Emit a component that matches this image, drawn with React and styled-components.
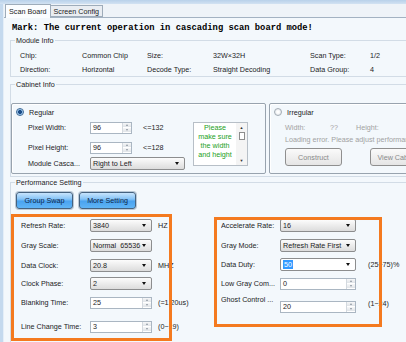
import React from 'react'
import styled, { createGlobalStyle } from 'styled-components'

const GlobalStyle = createGlobalStyle`
  body {
    margin: 0;
    background: #ffffff;
  }

  * {
    box-sizing: border-box;
  }
`

const leftRows = [
  { label: 'Refresh Rate:', kind: 'select', value: '3840', unit: 'HZ', mt: 5 },
  { label: 'Gray Scale:', kind: 'select', value: 'Normal  65536', mt: 7 },
  { label: 'Data Clock:', kind: 'select', value: '20.8', unit: 'MHZ', mt: 7 },
  { label: 'Clock Phase:', kind: 'select', value: '2', mt: 5 },
  { label: 'Blanking Time:', kind: 'spin', value: '25', unit: '(=1.20us)', mt: 6 },
  { label: 'Line Change Time:', kind: 'spin', value: '3', unit: '(0~19)', mt: 11 },
]

const rightRows = [
  { label: 'Accelerate Rate:', kind: 'select', value: '16', mt: 5 },
  { label: 'Gray Mode:', kind: 'select', value: 'Refresh Rate First', mt: 7 },
  { label: 'Data Duty:', kind: 'edit', value: '50', unit: '(25~75)%', mt: 6 },
  { label: 'Low Gray Com...', kind: 'spin', value: '0', mt: 6 },
  { label: 'Ghost Control ...', kind: 'spin', value: '20', unit: '(1~24)', mt: 3, tall: true },
]

function Dropdown({ width, value, editable }) {
  return (
    <Select $w={width} $editable={editable}>
      {editable ? <Highlight>{value}</Highlight> : <span>{value}</span>}
      <Arrow />
    </Select>
  )
}

function SpinBox({ width, value }) {
  return (
    <Spin $w={width}>
      <SpinText>{value}</SpinText>
      <SpinButtons>
        <SpinBtn>
          <SpinTri $up />
        </SpinBtn>
        <SpinBtn>
          <SpinTri />
        </SpinBtn>
      </SpinButtons>
    </Spin>
  )
}

function SettingRow({ row, labelWidth, controlWidth, unitGap }) {
  return (
    <Row $mt={row.mt} $tall={row.tall}>
      <RowLabel $w={labelWidth}>{row.label}</RowLabel>
      <RowControl>
        {row.kind === 'spin' ? (
          <SpinBox width={controlWidth} value={row.value} />
        ) : (
          <Dropdown width={controlWidth} value={row.value} editable={row.kind === 'edit'} />
        )}
      </RowControl>
      {row.unit && <Unit $gap={unitGap}>{row.unit}</Unit>}
    </Row>
  )
}

export default function App() {
  return (
    <>
      <GlobalStyle />
      <Window>
        <TopStrip />
        <Body>
          <SideStrip />
          <Content>
            <TabBar>
              <Tab $active>Scan Board</Tab>
              <Tab>Screen Config</Tab>
            </TabBar>
            <Page>
              <Mark>Mark: The current operation in cascading scan board mode!</Mark>

              <Group $mt={1}>
                <Legend>Module Info</Legend>
                <InfoGrid>
                  <span>Chip:</span>
                  <span>Common Chip</span>
                  <span>Size:</span>
                  <span>32W×32H</span>
                  <span>Scan Type:</span>
                  <span>1/2</span>
                  <span>Direction:</span>
                  <span>Horizontal</span>
                  <span>Decode Type:</span>
                  <span>Straight Decoding</span>
                  <span>Data Group:</span>
                  <span>4</span>
                </InfoGrid>
              </Group>

              <Group $mt={3}>
                <Legend>Cabinet Info</Legend>
                <CabinetRow>
                  <ModeBox $w={255}>
                    <RadioLine>
                      <Radio $checked />
                      <span>Regular</span>
                    </RadioLine>
                    <RegularBody>
                      <Fields>
                        <FieldRow $mt={1}>
                          <FieldLabel>Pixel Width:</FieldLabel>
                          <SpinBox width={42} value="96" />
                          <Limit>&lt;=132</Limit>
                        </FieldRow>
                        <FieldRow $mt={7}>
                          <FieldLabel>Pixel Height:</FieldLabel>
                          <SpinBox width={42} value="96" />
                          <Limit>&lt;=128</Limit>
                        </FieldRow>
                        <FieldRow $mt={3}>
                          <FieldLabel>Module Casca...</FieldLabel>
                          <Dropdown width={95} value="Right to Left" />
                        </FieldRow>
                      </Fields>
                      <HintBox>
                        <HintText>
                          Please
                          <br />
                          make sure
                          <br />
                          the width
                          <br />
                          and height
                        </HintText>
                        <ScrollBar>
                          <ScrollArrow>▲</ScrollArrow>
                          <ScrollThumb />
                          <ScrollArrow>▼</ScrollArrow>
                        </ScrollBar>
                      </HintBox>
                    </RegularBody>
                  </ModeBox>

                  <ModeBox $w={190}>
                    <RadioLine>
                      <Radio />
                      <span>Irregular</span>
                    </RadioLine>
                    <GrayLine $mt={4}>
                      <GrayCell $w={45}>Width:</GrayCell>
                      <GrayCell $w={26}>??</GrayCell>
                      <GrayCell>Height:</GrayCell>
                    </GrayLine>
                    <GrayLine $mt={3}>Loading error. Please adjust performance parameters</GrayLine>
                    <DisabledButtons>
                      <DisabledButton>Construct</DisabledButton>
                      <DisabledButton>View Cabinet</DisabledButton>
                    </DisabledButtons>
                  </ModeBox>
                </CabinetRow>
              </Group>

              <Group $mt={1}>
                <Legend>Performance Setting</Legend>
                <BlueButtons>
                  <BlueButton>Group Swap</BlueButton>
                  <BlueButton>More Setting</BlueButton>
                </BlueButtons>
                <Columns>
                  <Column $w={203} $pad={10}>
                    {leftRows.map((row) => (
                      <SettingRow key={row.label} row={row} labelWidth={69} controlWidth={62} unitGap={6} />
                    ))}
                    <Highlighter $top={0} $w={161} $h={127} />
                  </Column>
                  <Column $w={200} $pad={7}>
                    {rightRows.map((row) => (
                      <SettingRow key={row.label} row={row} labelWidth={59} controlWidth={76} unitGap={12} />
                    ))}
                    <Highlighter $top={3} $w={168} $h={110} />
                  </Column>
                </Columns>
              </Group>
            </Page>
          </Content>
        </Body>
      </Window>
    </>
  )
}

const Window = styled.div`
  position: relative;
  width: 406px;
  height: 342px;
  overflow: hidden;
  display: flex;
  flex-direction: column;
  background: #f3f8fc;
  color: #1c1c1c;
  font-family: 'Liberation Sans', Arial, sans-serif;
  font-size: 7.2px;
  line-height: 9px;
`

const TopStrip = styled.div`
  flex: none;
  height: 4px;
  background: linear-gradient(#b8d1ea, #d2e2f2);
`

const Body = styled.div`
  flex: 1;
  display: flex;
  min-height: 0;
`

const SideStrip = styled.div`
  flex: none;
  width: 4px;
  background: #c4d9ee;
  border-right: 1px solid #e4eef8;
`

const Content = styled.div`
  flex: 1;
  min-width: 0;
  overflow: hidden;
`

const TabBar = styled.div`
  display: flex;
  align-items: flex-end;
  height: 14px;
  padding-left: 1px;
  background: #eef3f8;
  border-bottom: 1px solid #a3b2c2;
`

const Tab = styled.div`
  height: ${(p) => (p.$active ? 14 : 12)}px;
  margin-bottom: ${(p) => (p.$active ? -1 : 0)}px;
  padding: ${(p) => (p.$active ? '2px 3px 0' : '1px 3px 0')};
  background: ${(p) => (p.$active ? '#fbfdff' : '#e9edf2')};
  border: 1px solid #9eacba;
  border-bottom: ${(p) => (p.$active ? 'none' : '1px solid #9eacba')};
  border-left: ${(p) => (p.$active ? '1px solid #9eacba' : 'none')};
  white-space: nowrap;
`

const Page = styled.div`
  width: 470px;
  padding: 3px 0 0 6px;
`

const Mark = styled.div`
  padding-left: 2px;
  font-family: 'Liberation Mono', 'Courier New', monospace;
  font-size: 8.8px;
  font-weight: bold;
  line-height: 14px;
  color: #000000;
  white-space: nowrap;
`

const Group = styled.fieldset`
  min-width: 0;
  margin: ${(p) => p.$mt}px 0 0;
  padding: 0;
  border: 1px solid #d2dce6;
`

const Legend = styled.legend`
  margin-left: 4px;
  padding: 0 1px;
  font-size: 7.2px;
  line-height: 9px;
`

const InfoGrid = styled.div`
  display: grid;
  grid-template-columns: 62px 65px 66px 97px 60px 40px;
  grid-auto-rows: 14px;
  align-items: center;
  padding: 3px 0 0 9px;
  white-space: nowrap;
`

const CabinetRow = styled.div`
  display: flex;
  gap: 3px;
  padding: 14px 0 2px;
`

const ModeBox = styled.div`
  flex: none;
  width: ${(p) => p.$w}px;
  height: 71px;
  padding-top: 1px;
  border: 1px solid #98a3ae;
  border-radius: 2px;
  box-shadow: inset 1px 1px 0 #ffffff;
`

const RadioLine = styled.div`
  display: flex;
  align-items: center;
  gap: 5px;
  height: 14px;
  padding-left: 4px;
`

const Radio = styled.span`
  width: 8px;
  height: 8px;
  border-radius: 50%;
  border: 1px solid ${(p) => (p.$checked ? '#3a6896' : '#a3acb5')};
  background: ${(p) =>
    p.$checked
      ? 'radial-gradient(circle, #1b4c86 0 1.6px, #7fb2e2 2.2px, #e6f0fa 3.4px)'
      : 'radial-gradient(circle, #ffffff 0 1px, #e1e5ea 3.4px)'};
`

const RegularBody = styled.div`
  display: flex;
  align-items: flex-start;
  margin-top: 1px;
`

const Fields = styled.div`
  display: flex;
  flex-direction: column;
  width: 181px;
  padding-left: 16px;
`

const FieldRow = styled.div`
  display: flex;
  align-items: center;
  height: 13px;
  margin-top: ${(p) => p.$mt}px;
`

const FieldLabel = styled.span`
  width: 62px;
  white-space: nowrap;
`

const Limit = styled.span`
  margin-left: 11px;
`

const HintBox = styled.div`
  display: flex;
  width: 55px;
  height: 44px;
  margin-top: 2px;
  background: #ffffff;
  border: 1px solid #b7bfc7;
`

const HintText = styled.div`
  flex: 1;
  padding-top: 0;
  color: #22a022;
  text-align: center;
  white-space: nowrap;
`

const ScrollBar = styled.div`
  display: flex;
  flex-direction: column;
  align-items: center;
  width: 11px;
  background: #f4f4f4;
`

const ScrollArrow = styled.span`
  font-size: 4px;
  line-height: 9px;
  color: #333333;
`

const ScrollThumb = styled.span`
  width: 6px;
  height: 8px;
  margin: 0 0 auto;
  background: #ffffff;
  border: 1px solid #8d8d8d;
`

const GrayLine = styled.div`
  display: flex;
  height: 9px;
  margin-top: ${(p) => p.$mt}px;
  padding-left: 15px;
  color: #a2a2a2;
  white-space: nowrap;
`

const GrayCell = styled.span`
  flex: none;
  width: ${(p) => (p.$w ? `${p.$w}px` : 'auto')};
`

const DisabledButtons = styled.div`
  display: flex;
  gap: 28px;
  margin-top: 4px;
  padding-left: 15px;
`

const DisabledButton = styled.div`
  flex: none;
  width: 57px;
  height: 18px;
  display: flex;
  align-items: center;
  justify-content: center;
  border: 1px solid #8f8f8f;
  border-radius: 3px;
  background: linear-gradient(#fafafa, #e5e5e5);
  color: #8a8a8a;
  white-space: nowrap;
`

const BlueButtons = styled.div`
  display: flex;
  gap: 6px;
  margin-top: 5px;
  padding-left: 5px;
`

const BlueButton = styled.div`
  width: 57px;
  height: 17px;
  display: flex;
  align-items: center;
  justify-content: center;
  border: 1px solid #45627f;
  border-radius: 3px;
  background: linear-gradient(#c8e4fc 0%, #86c4f7 40%, #4aa3f0 55%, #5fb4f6 100%);
  box-shadow: 0 0 0 1px #b9c8d6;
  color: #0c2548;
  white-space: nowrap;
`

const Columns = styled.div`
  display: flex;
  margin-top: 5px;
  height: 140px;
`

const Column = styled.div`
  position: relative;
  flex: none;
  display: flex;
  flex-direction: column;
  width: ${(p) => p.$w}px;
  padding-left: ${(p) => p.$pad}px;
`

const Highlighter = styled.div`
  position: absolute;
  left: 0;
  top: ${(p) => p.$top}px;
  width: ${(p) => p.$w}px;
  height: ${(p) => p.$h}px;
  border: 3px solid #f47a1f;
  pointer-events: none;
`

const Row = styled.div`
  display: flex;
  align-items: ${(p) => (p.$tall ? 'flex-end' : 'center')};
  height: ${(p) => (p.$tall ? 20 : 13)}px;
  margin-top: ${(p) => p.$mt}px;
  white-space: nowrap;
`

const RowLabel = styled.span`
  flex: none;
  width: ${(p) => p.$w}px;
  overflow: hidden;
  align-self: ${(p) => 'flex-start'};
  line-height: 13px;
`

const RowControl = styled.div`
  flex: none;
`

const Unit = styled.span`
  margin-left: ${(p) => p.$gap}px;
  align-self: center;
  line-height: 13px;
`

const Select = styled.div`
  display: flex;
  align-items: center;
  width: ${(p) => p.$w}px;
  height: 13px;
  padding: 0 3px 0 2px;
  border: 1px solid #8c8d8e;
  border-radius: 2px;
  background: ${(p) => (p.$editable ? '#ffffff' : 'linear-gradient(#fcfcfc, #dcdcdc)')};
  white-space: pre;
`

const Highlight = styled.span`
  padding: 0 1px;
  background: #3399ff;
  color: #ffffff;
`

const Arrow = styled.span`
  margin-left: auto;
  margin-right: 2px;
  width: 0;
  height: 0;
  border-left: 2px solid transparent;
  border-right: 2px solid transparent;
  border-top: 3px solid #111111;
`

const Spin = styled.div`
  display: flex;
  width: ${(p) => p.$w}px;
  height: 12px;
  background: #ffffff;
  border: 1px solid #aab6c2;
`

const SpinText = styled.span`
  flex: 1;
  padding-left: 2px;
  line-height: 10px;
`

const SpinButtons = styled.div`
  display: flex;
  flex-direction: column;
  width: 9px;
  border-left: 1px solid #d3d9df;
`

const SpinBtn = styled.div`
  flex: 1;
  display: flex;
  align-items: center;
  justify-content: center;
  background: linear-gradient(#f6f7f8, #e0e4e8);
  border-bottom: 1px solid #ffffff;
`

const SpinTri = styled.span`
  width: 0;
  height: 0;
  border-left: 1.5px solid transparent;
  border-right: 1.5px solid transparent;
  ${(p) => (p.$up ? 'border-bottom: 2px solid #8a949e;' : 'border-top: 2px solid #8a949e;')}
`
